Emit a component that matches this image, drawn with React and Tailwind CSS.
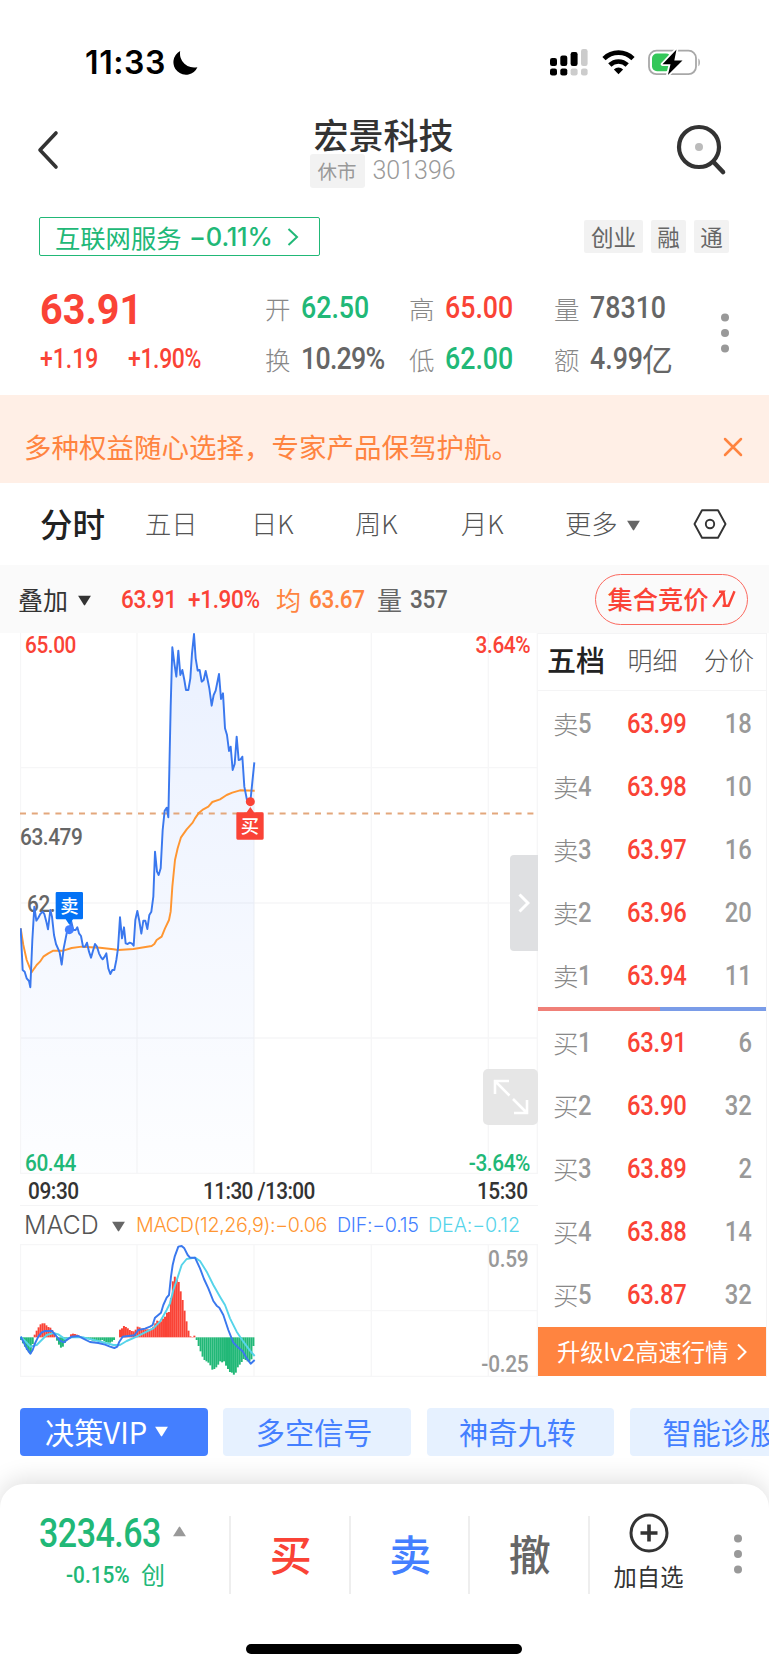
import React from 'react';
import clsx from 'clsx';

const ASKS = [
    ['卖5', '63.99', '18'],
    ['卖4', '63.98', '10'],
    ['卖3', '63.97', '16'],
    ['卖2', '63.96', '20'],
    ['卖1', '63.94', '11'],
];

const BIDS = [
    ['买1', '63.91', '6'],
    ['买2', '63.90', '32'],
    ['买3', '63.89', '2'],
    ['买4', '63.88', '14'],
    ['买5', '63.87', '32'],
];

const PRICE_LINE =
    '62,925 68,1050 74,1055 80,1075 87,1083 91,1102 97,960 103,860 109,902 115,893 121,882 128,875 133,882 139,905 144,928 151,870 156,890 162,945 168,972 179,997 185,1034 191,985 197,955 202,930 208,928 214,905 220,930 227,930 232,922 237,940 243,948 249,980 255,980 261,968 267,995 273,1013 279,992 285,972 291,980 297,1000 303,1012 308,1018 314,1010 319,1000 325,1045 331,1062 337,1050 343,1050 349,1020 354,985 360,892 366,955 372,922 377,970 383,972 389,968 395,970 401,977 406,900 412,873 418,903 424,941 430,902 436,902 442,927 448,885 454,875 460,830 465,695 471,755 476,765 482,745 488,630 494,572 500,563 505,592 512,260 517,82 523,130 529,170 535,92 541,165 547,150 553,180 558,210 565,210 571,175 576,100 582,42 587,115 593,152 599,150 605,185 611,180 617,153 623,180 628,205 635,257 641,225 647,212 657,162 663,237 669,220 675,325 681,345 687,393 692,380 698,450 704,432 710,350 716,420 722,418 727,410 733,500 741,540 751,545 763,427';

const AVG_LINE =
    '62,925 70,975 80,1020 88,1040 95,1057 103,1045 110,1035 120,1025 130,1010 145,1000 160,992 190,992 215,984 245,980 300,983 340,988 355,990 400,987 455,978 463,972 470,960 485,950 495,925 507,900 512,875 517,800 525,720 533,685 543,652 560,628 578,608 585,595 597,578 610,568 625,560 637,546 660,538 680,525 697,518 720,511 764,512';

const DIF_LINE =
    '62,560 70,575 80,595 91,611 98,600 105,580 115,560 125,547 135,543 145,543 155,542 162,550 170,560 180,572 192,577 203,568 215,560 235,558 250,566 270,576 295,579 315,584 330,590 343,594 352,590 358,575 368,560 385,558 403,556 415,540 435,536 450,530 458,525 465,503 483,488 490,465 500,443 507,435 513,380 518,345 524,320 535,290 545,288 553,295 563,315 570,323 585,323 600,355 612,387 625,415 640,453 650,467 658,473 670,495 685,540 700,578 712,590 728,604 740,625 752,641 764,630';

const DEA_LINE =
    '62,560 80,578 91,590 110,585 125,570 140,555 160,549 175,553 195,567 215,562 250,562 290,572 340,585 360,585 380,573 410,560 440,545 460,535 480,515 500,480 510,460 520,420 532,385 545,345 560,327 585,323 600,333 620,365 640,405 660,440 675,465 690,505 710,545 730,575 750,602 764,618';

// [first x, values per minute]
const MACD_BARS = [
    [63, [-8, -18, -28, -38, -45, -48, -20]],
    [104, [8, 20, 30, 39, 42, 42, 36, 31, 29, 22, 12]],
    [171, [-10, -22, -31, -28, -17, -9, -5]],
    [213, [9, 11, 10, 8, 5, 3]],
    [254, [-3, -4, -6, -8, -10, -12, -10, -10, -10, -8, -12, -14, -16, -16, -13, -8]],
    [360, [23, 27, 34, 31, 27, 22, 19, 18, 23, 32, 30, 26, 26, 24, 24, 24, 26, 32, 42, 50, 48, 48, 56, 62, 74, 76, 118, 168, 182, 172, 166, 138, 112, 80, 48, 20, 3, 1, 5]],
    [590, [-8, -26, -42, -58, -68, -72, -76, -84, -97, -95, -90, -82, -72, -75, -72, -85, -95, -104, -106, -112, -106, -90, -82, -74, -65, -68, -72, -72, -66, -26]],
];

// digits are condensed to get the DIN look
function Num({ children, className }) {
    return (
        <span className={clsx('inline-flex shrink-0 whitespace-nowrap font-[Roboto,sans-serif]', className)}>
            <span className="inline-block origin-left scale-x-[0.85]">{children}</span>
        </span>
    );
}

function NumRight({ children, className }) {
    return (
        <span className={clsx('inline-flex shrink-0 justify-end whitespace-nowrap font-[Roboto,sans-serif]', className)}>
            <span className="inline-block origin-right scale-x-[0.85]">{children}</span>
        </span>
    );
}

function Triangle({ className }) {
    return (
        <svg viewBox="0 0 14 10" className={className}>
            <path d="M1 0.5h12L7.6 9.3q-.6.7-1.2 0z" fill="currentColor" />
        </svg>
    );
}

function Dots() {
    return (
        <svg viewBox="0 0 8 40" className="w-2 h-10 text-[#999]">
            <circle cx="4" cy="4.4" r="4" fill="currentColor" />
            <circle cx="4" cy="20" r="4" fill="currentColor" />
            <circle cx="4" cy="35.6" r="4" fill="currentColor" />
        </svg>
    );
}

function StatusBar() {
    return (
        <div className="h-[103px] pt-[45px] pl-[85px] pr-[67px] flex items-start">
            <span className="w-[87px] text-[32px] leading-[36px] font-semibold text-black font-[Inter,sans-serif] tracking-[0.6px]">11:33</span>
            <svg viewBox="0 0 27 26" className="w-[26px] h-[26px] mt-[5px]">
                <path d="M8.500 0.600A13 13 0 1 0 26.400 17.300 14.600 14.600 0 0 1 8.500 0.600z" fill="#000" />
            </svg>
            <svg viewBox="0 0 38 27" className="w-[38px] h-[27px] ml-auto mt-[4px]">
                <rect x="0" y="9" width="7" height="8" rx="2.2" />
                <rect x="10.3" y="6.5" width="7" height="10.5" rx="2.2" />
                <rect x="20.6" y="3" width="7" height="14" rx="2.2" />
                <rect x="31" y="0" width="6.6" height="17" rx="2.2" fill="#ccc" />
                <rect x="0" y="19.4" width="7" height="7" rx="2.2" />
                <rect x="10.3" y="19.4" width="7" height="7" rx="2.2" />
                <rect x="20.6" y="19.4" width="7" height="7" rx="2.2" fill="#ccc" />
                <rect x="31" y="19.4" width="6.6" height="7" rx="2.2" fill="#ccc" />
            </svg>
            <svg viewBox="0 0 33 25" className="w-[33px] h-[25px] ml-[14px] mt-[5px]" fill="none" stroke="#000" strokeWidth="4.6">
                <path d="M2 8.6a20.6 20.6 0 0 1 29 0" />
                <path d="M7.8 15a12.4 12.4 0 0 1 17.4 0" />
                <path d="M16.5 24.2l-4.6-4.8a6.6 6.6 0 0 1 9.2 0z" fill="#000" stroke="none" />
            </svg>
            <svg viewBox="0 0 54 27" className="w-[54px] h-[27px] ml-[13px] mt-[4px]">
                <rect x="1" y="1.6" width="47" height="23.6" rx="7.5" fill="#fff" stroke="#a8a8a8" strokeWidth="1.8" />
                <path d="M50.4 9.5c2 .7 2 7 0 7.8z" fill="#a8a8a8" />
                <rect x="4" y="4.5" width="19" height="17.8" rx="5" fill="#34c759" />
                <path d="M28.5 0.5L14.5 15.2h8l-2.6 10.8L34.5 11.4h-8.2z" fill="#000" stroke="#fff" strokeWidth="3.5" paintOrder="stroke" strokeLinejoin="round" />
            </svg>
        </div>
    );
}

function Header() {
    return (
        <div className="h-[100px] pl-[36px] pr-[40px] flex">
            <svg viewBox="0 0 24 42" className="w-6 h-[42px] mt-[26px]" fill="none" stroke="#333" strokeWidth="3.6" strokeLinecap="round" strokeLinejoin="round">
                <path d="M20 4L4 21l16 17" />
            </svg>
            <div className="flex-1 flex flex-col items-center pl-[32px]">
                <h1 className="h-[37px] text-[35px] leading-[36px] font-medium text-[#333] mt-[13px]">宏景科技</h1>
                <div className="flex items-center">
                    <span className="w-[55px] h-[34px] rounded-[3px] bg-[#f2f2f2] text-[#999] text-[19.5px] leading-[33px] text-center">休市</span>
                    <span className="ml-[8px] w-[85px] text-[25px] leading-[36px] text-[#999] font-[Roboto,sans-serif] font-light">301396</span>
                </div>
            </div>
            <svg viewBox="0 0 54 54" className="w-[54px] h-[54px] mt-[20px]" fill="none" stroke="#333" strokeWidth="4.2" strokeLinecap="round">
                <circle cx="24" cy="24" r="20" />
                <path d="M39 39.5l9 9.5" strokeWidth="4.6" />
                <circle cx="24" cy="24" r="4" fill="#bbb" stroke="none" />
            </svg>
        </div>
    );
}

function Tag({ children, className }) {
    return <span className={clsx('h-[33px] rounded-[2px] bg-[#f2f2f2] text-[#666] text-[22.5px] leading-[32px] text-center', className)}>{children}</span>;
}

function Quote() {
    const label = 'w-[36px] text-[25.5px] leading-[48px] font-light text-[#888]';
    const num = 'text-[31.5px] leading-[48px] font-medium';
    return (
        <>
            <div className="mt-[14px] h-[39px] pl-[39px] pr-[40px] flex items-center">
                <div className="w-[281px] h-[39px] border-[1.5px] border-[#21b877] rounded-[2px] text-[#21b877] flex items-center pl-[15px]">
                    <span className="text-[25.3px] leading-[36px] w-[134px]">互联网服务</span>
                    <span className="text-[25.5px] leading-[36px] w-[98px] font-[Inter,sans-serif] font-medium tracking-[-0.2px]">−0.11%</span>
                    <svg viewBox="0 0 12 18" className="w-3 h-[18px]" fill="none" stroke="currentColor" strokeWidth="2">
                        <path d="M1.5 1l8.5 8-8.5 8" />
                    </svg>
                </div>
                <div className="ml-auto flex gap-2">
                    <Tag className="w-[59px]">创业</Tag>
                    <Tag className="w-[35px]">融</Tag>
                    <Tag className="w-[35px]">通</Tag>
                </div>
            </div>
            <div className="h-[139px] pt-[28px] pl-[39px] flex">
                <div className="w-[226px] pl-px text-[#fa4336]">
                    <div className="h-[52px] text-[43px] leading-[50px] font-bold font-[Roboto,sans-serif]">
                        <span className="inline-block origin-left scale-x-[0.92]">63.91</span>
                    </div>
                    <div className="h-[46px] flex items-center text-[27px] leading-[46px] font-medium">
                        <Num className="w-[88px]">+1.19</Num>
                        <Num className="tracking-[-0.4px]">+1.90%</Num>
                    </div>
                </div>
                <div className="w-[144px]">
                    <div className="flex"><span className={label}>开</span><Num className={clsx(num, 'text-[#21b877]')}>62.50</Num></div>
                    <div className="flex mt-[3px]"><span className={label}>换</span><Num className={clsx(num, 'tracking-[-0.9px] text-[#666]')}>10.29%</Num></div>
                </div>
                <div className="w-[145px]">
                    <div className="flex"><span className={label}>高</span><Num className={clsx(num, 'text-[#fa4336]')}>65.00</Num></div>
                    <div className="flex mt-[3px]"><span className={label}>低</span><Num className={clsx(num, 'text-[#21b877]')}>62.00</Num></div>
                </div>
                <div className="w-[167px]">
                    <div className="flex"><span className={label}>量</span><Num className={clsx(num, 'text-[#666]')}>78310</Num></div>
                    <div className="flex mt-[3px]">
                        <span className={label}>额</span>
                        <Num className={clsx(num, 'w-[52px] text-[#666]')}>4.99</Num>
                        <span className="text-[31px] leading-[46px] text-[#666]">亿</span>
                    </div>
                </div>
                <div className="pt-[29px]"><Dots /></div>
            </div>
        </>
    );
}

function Banner() {
    return (
        <div className="h-[88px] bg-[#ffefe6] pl-[24px] pr-[26px] flex items-center justify-between text-[#ff8440]">
            <span className="text-[27.5px] leading-[40px] pt-[14px]">多种权益随心选择，专家产品保驾护航。</span>
            <svg viewBox="0 0 20 20" className="w-5 h-5 mt-[15px]" fill="none" stroke="currentColor" strokeWidth="2.5" strokeLinecap="round">
                <path d="M2 2l16 16M18 2L2 18" />
            </svg>
        </div>
    );
}

function PeriodTabs() {
    return (
        <div className="h-[82px] pb-[2px] pl-[40px] flex items-center text-[26.3px] leading-[40px] font-light text-[#555]">
            <span className="w-[105px] text-[32.5px] font-medium text-[#222]">分时</span>
            <span className="w-[106px]">五日</span>
            <span className="w-[104px]">日K</span>
            <span className="w-[106px]">周K</span>
            <span className="w-[104px]">月K</span>
            <span className="w-[61px]">更多</span>
            <Triangle className="w-[15px] h-[11px] mt-1 text-[#666]" />
            <svg viewBox="0 0 34 30" className="w-[34px] h-[30px] ml-[52px] mt-px" fill="none" stroke="#333" strokeWidth="1.9" strokeLinejoin="round">
                <path d="M9 1.2h16L32.5 15 25 28.8H9L1.5 15z" />
                <circle cx="17" cy="15" r="4.2" />
            </svg>
        </div>
    );
}

function QuoteStrip() {
    const num = 'text-[26.5px] leading-[40px] font-medium tracking-[-0.4px]';
    return (
        <div className="h-[68px] bg-[#fafafa] pl-[18px] pr-[21px] flex items-center">
            <span className="w-[59px] text-[25px] leading-[40px] text-[#333]">叠加</span>
            <Triangle className="w-[15px] h-[11px] mt-[3px] text-[#333]" />
            <Num className={clsx(num, 'ml-[29px] w-[67px] text-[#fa4336]')}>63.91</Num>
            <Num className={clsx(num, 'w-[88px] text-[#fa4336]')}>+1.90%</Num>
            <span className="w-[33px] text-[25px] leading-[40px] text-[#ff8440]">均</span>
            <Num className={clsx(num, 'w-[68px] text-[#ff8440]')}>63.67</Num>
            <span className="w-[33px] text-[25px] leading-[40px] text-[#666]">量</span>
            <Num className={clsx(num, 'text-[#666]')}>357</Num>
            <button className="ml-auto w-[153px] h-[51px] rounded-full border-[1.5px] border-[#fa6a60] text-[#fa4336] flex items-center justify-center">
                <span className="text-[25.3px] leading-[38px] pb-[2px] font-medium">集合竞价</span>
                <svg viewBox="0 0 24 18" className="w-6 h-[18px] ml-[3px]" fill="none" stroke="currentColor" strokeWidth="2.4">
                    <path d="M1.2 16.800L11.500 1.800H7M11.500 1.800L13 15.800h-2.500M13 15.800h3.500L22.500 1.200" />
                </svg>
            </button>
        </div>
    );
}

function PriceChart() {
    const num = 'absolute h-6 text-[24.5px] leading-[24px] font-medium tracking-[-0.5px]';
    return (
        <div className="relative w-[518px] h-[541px]">
            <svg viewBox="60 39 1554 1623" className="block w-[518px] h-[541px]" fill="none" strokeLinejoin="round">
                <defs>
                    <linearGradient id="area" x1="0" y1="0" x2="0" y2="1">
                        <stop offset="0" stopColor="#3f7cff" stopOpacity="0.11" />
                        <stop offset="1" stopColor="#3f7cff" stopOpacity="0.01" />
                    </linearGradient>
                </defs>
                <path d="M61.5 39V1661M411 39V1661M762 39V1661M1114 39V1661M1465 39V1661M1612 39V1661M60 443H1614M60 849H1614M60 1254H1614M60 1660H1614" stroke="#f6f6f7" strokeWidth="4" />
                <polygon points={`62,1660 ${PRICE_LINE} 763,1660`} fill="url(#area)" />
                <path d="M60 580.5H1614" stroke="#e3a77c" strokeWidth="5.5" strokeDasharray="18 17.4" />
                <polyline points={AVG_LINE} stroke="#ff9631" strokeWidth="5.8" />
            </svg>
            <Num className={clsx(num, 'left-[5px] top-0 text-[#fa4336]')}>65.00</Num>
            <NumRight className={clsx(num, 'right-[8px] top-0 text-[#fa4336]')}>3.64%</NumRight>
            <Num className={clsx(num, 'left-0 top-[192px] text-[#666]')}>63.479</Num>
            <Num className={clsx(num, 'left-[7px] top-[259px] text-[#666]')}>62.</Num>
            <Num className={clsx(num, 'left-[5px] top-[518px] text-[#21b877]')}>60.44</Num>
            <NumRight className={clsx(num, 'right-[8px] top-[518px] text-[#21b877]')}>-3.64%</NumRight>
            <svg viewBox="60 39 1554 1623" className="absolute left-0 top-0 w-[518px] h-[541px]" fill="none" strokeLinejoin="round">
                <polyline points={PRICE_LINE} stroke="#3a78ee" strokeWidth="5.8" />
                <circle cx="208" cy="929" r="13.5" fill="#447fff" />
                <path d="M171 816h74q4 0 4 4v74q0 4-4 4h-26l-11 16-11-16h-26q-4 0-4-4v-74q0-4 4-4z" fill="#0472f5" />
                <text x="208" y="878" textAnchor="middle" fontSize="55" fontWeight="500" fill="#fff">卖</text>
                <circle cx="751" cy="545" r="13.5" fill="#fa4336" />
                <path d="M713 577h27l11-16 11 16h25q4 0 4 4v74q0 4-4 4h-74q-4 0-4-4v-74q0-4 4-4z" fill="#fa4336" />
                <text x="750" y="639" textAnchor="middle" fontSize="55" fontWeight="500" fill="#fff">买</text>
            </svg>
            <div className="absolute right-0 top-[222px] w-[28px] h-[96px] rounded-l-[4px] bg-[#dfe0e2] flex items-center justify-center">
                <svg viewBox="0 0 12 20" className="w-3 h-5" fill="none" stroke="#fff" strokeWidth="3">
                    <path d="M1.5 1.5L10 10l-8.5 8.5" />
                </svg>
            </div>
            <div className="absolute right-0 top-[436px] w-[55px] h-[56px] rounded-[5px] bg-[#e6e6e6] flex items-center justify-center">
                <svg viewBox="0 0 36 36" className="w-9 h-9" fill="none" stroke="#fff" strokeWidth="2.6">
                    <path d="M16.5 16.5L2 2M2 15V2h14M20 20l14 14M34 21v13H21" />
                </svg>
            </div>
        </div>
    );
}

function MacdChart() {
    const num = 'absolute right-[10px] text-[24.5px] leading-[25px] font-medium tracking-[-0.3px] text-[#999]';
    return (
        <div className="relative w-[518px] h-[133px]">
            <svg viewBox="60 282 1554 399" className="block w-[518px] h-[133px]" fill="none" strokeLinejoin="round">
                <path d="M61.5 282V681M411 282V681M762 282V681M1114 282V681M1465 282V681M1612 282V681M60 283.5H1614M60 482H1614M60 679.5H1614" stroke="#f6f6f7" strokeWidth="4" />
                {MACD_BARS.map(([start, values]) =>
                    values.map((v, i) => (
                        <rect
                            key={`${start}-${i}`}
                            x={start + i * 5.87 - 2.9}
                            y={v > 0 ? 562 - v : 562}
                            width="5.9"
                            height={Math.abs(v)}
                            fill={v > 0 ? '#fa4336' : '#21b877'}
                        />
                    ))
                )}
                <polyline points={DEA_LINE} stroke="#56d4ea" strokeWidth="5.8" />
                <polyline points={DIF_LINE} stroke="#3a78ee" strokeWidth="5.8" />
            </svg>
            <NumRight className={clsx(num, 'top-[2px]')}>0.59</NumRight>
            <NumRight className={clsx(num, 'top-[107px]')}>-0.25</NumRight>
        </div>
    );
}

function Charts() {
    return (
        <div className="w-[518px]">
            <PriceChart />
            <div className="h-[31px] pl-[8px] pr-[10px] flex text-[24.5px] leading-[33px] font-medium tracking-[-0.5px] text-[#333]">
                <Num className="w-[175px]">09:30</Num>
                <Num className="w-[130px] tracking-[-0.7px]">11:30 /13:00</Num>
                <NumRight className="ml-auto w-[120px]">15:30</NumRight>
            </div>
            <div className="h-[39px] border-t border-[#f4f4f5] pl-[4px] flex items-center font-[Inter,sans-serif] text-[19.7px] leading-[34px] font-light">
                <span className="w-[87px] text-[25px] text-[#555]">MACD</span>
                <Triangle className="w-[15px] h-[11px] mt-[3px] text-[#666]" />
                <span className="ml-[10px] w-[201px] tracking-[-0.35px] text-[#ff9631] whitespace-nowrap">MACD(12,26,9):−0.06</span>
                <span className="w-[91px] tracking-[-0.3px] text-[#447fff] whitespace-nowrap">DIF:−0.15</span>
                <span className="tracking-[-0.1px] text-[#56d4ea] whitespace-nowrap">DEA:−0.12</span>
            </div>
            <MacdChart />
        </div>
    );
}

function BookRow({ row }) {
    const [label, price, qty] = row;
    return (
        <div className="h-[63.2px] pl-[15px] pr-[14px] flex items-center leading-[40px] text-[#888]">
            <span className="w-[25px] pb-[3px] text-[25.5px] leading-[37px] font-light">{label[0]}</span>
            <Num className="w-[49px] text-[28px] font-medium text-[#999]">{label[1]}</Num>
            <Num className="text-[28px] font-medium tracking-[-0.3px] text-[#fa4336]">{price}</Num>
            <NumRight className="ml-auto w-[40px] text-[28px] font-medium text-[#999]">{qty}</NumRight>
        </div>
    );
}

function OrderBook() {
    return (
        <div className="w-[229px] border-r border-[#f4f4f5]">
            <div className="h-[58px] border-y border-[#f4f4f5] pb-[7px] pl-[9px] pr-[12px] flex items-center justify-between text-[25px] leading-[40px] font-light text-[#555]">
                <span className="text-[29px] font-medium text-[#222]">五档</span>
                <span className="ml-[-4px]">明细</span>
                <span>分价</span>
            </div>
            <div className="h-[315px] pt-px">
                {ASKS.map((row) => <BookRow key={row[0]} row={row} />)}
            </div>
            <div className="h-[5px] flex py-[0.5px]">
                <div className="w-[122px] bg-[#f08078]" />
                <div className="flex-1 bg-[#7a9ce8]" />
            </div>
            <div className="h-[316px]">
                {BIDS.map((row) => <BookRow key={row[0]} row={row} />)}
            </div>
            <div className="h-[49px] bg-[#ff8440] pl-[19px] flex items-center text-white">
                <span className="w-[180px] pb-[2px] text-[23.3px] leading-[36px] whitespace-nowrap">升级lv2高速行情</span>
                <svg viewBox="0 0 10 18" className="w-[10px] h-[18px]" fill="none" stroke="currentColor" strokeWidth="2">
                    <path d="M1 1.5L8.5 9 1 16.5" />
                </svg>
            </div>
        </div>
    );
}

function Chips() {
    const chip = 'w-[187.5px] h-[48px] pb-[2px] shrink-0 rounded-[4px] bg-[#e6f1ff] text-[#447fff] flex items-center pl-[32.5px]';
    return (
        <div className="mt-[31px] h-[48px] pl-[20px] flex gap-[15.8px] overflow-hidden text-[29.2px] leading-[44px] whitespace-nowrap">
            <div className="w-[187.5px] h-[48px] pb-[2px] shrink-0 rounded-[4px] bg-[#447fff] text-white flex items-center pl-[25px]">
                <span className="w-[109px]">决策VIP</span>
                <Triangle className="w-[15px] h-[11px]" />
            </div>
            <div className={chip}>多空信号</div>
            <div className={chip}>神奇九转</div>
            <div className={chip}>智能诊股</div>
        </div>
    );
}

function BottomBar() {
    const trade = 'w-[119.5px] h-[78px] pb-[4px] pl-[2px] border-l-2 border-[#eee] flex items-center justify-center text-[42px] leading-[60px] font-medium';
    return (
        <div className="mt-[28px] h-[186px] rounded-t-[24px] bg-white shadow-[0_-4px_24px_rgba(0,0,0,0.13)] flex flex-col">
            <div className="pt-[32px] flex">
                <div className="w-[229px] pl-[39px] text-[#21b877]">
                    <div className="h-[36px] flex items-center text-[40px] leading-[36px] font-medium tracking-[-0.6px]">
                        <Num className="w-[133px]">3234.63</Num>
                        <Triangle className="w-[15px] h-[11px] mb-[6px] rotate-180 text-[#999]" />
                    </div>
                    <div className="mt-[5px] flex items-center pl-[27px] text-[24.5px] leading-[36px] font-medium">
                        <Num className="w-[75px]">-0.15%</Num>
                        <span className="pb-[2px] text-[24px] leading-[34px] font-normal">创</span>
                    </div>
                </div>
                <div className={clsx(trade, 'text-[#fa4336]')}>买</div>
                <div className={clsx(trade, 'text-[#447fff]')}>卖</div>
                <div className={clsx(trade, 'text-[#666]')}>撤</div>
                <div className="w-[146px] h-[78px] border-l-2 border-[#eee] flex">
                    <div className="w-[118px] flex flex-col items-center text-[#333]">
                        <svg viewBox="0 0 40 40" className="w-10 h-10 shrink-0 -mt-[3px]" fill="none" stroke="currentColor" strokeWidth="3">
                            <circle cx="20" cy="20" r="18" />
                            <path d="M20 11.5v17M11.5 20h17" strokeWidth="3.6" />
                        </svg>
                        <span className="mt-[6px] text-[23.3px] leading-[34px]">加自选</span>
                    </div>
                </div>
                <div className="pt-[18px]"><Dots /></div>
            </div>
            <div className="mt-auto mb-[16px] ml-[246px] w-[276px] h-[10px] rounded-full bg-black" />
        </div>
    );
}

export default function App() {
    return (
        <div className="w-[769px] h-[1670px] overflow-hidden bg-white font-['Noto_Sans_CJK_SC',sans-serif]">
            <StatusBar />
            <Header />
            <Quote />
            <Banner />
            <PeriodTabs />
            <QuoteStrip />
            <div className="h-[744px] pl-[20px] flex">
                <Charts />
                <OrderBook />
            </div>
            <Chips />
            <BottomBar />
        </div>
    );
}
